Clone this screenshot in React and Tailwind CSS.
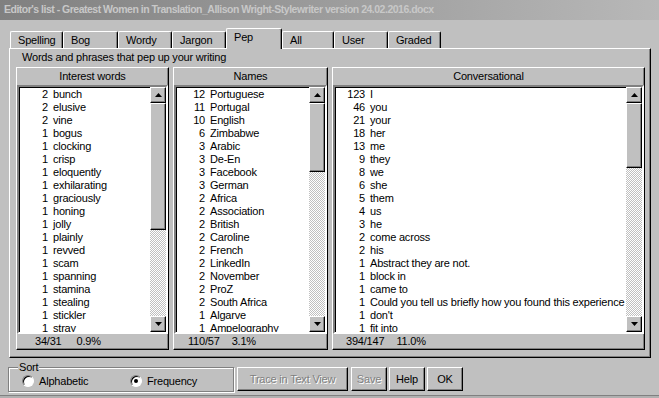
import React from "react";

const raised =
  "border border-t-white border-l-white border-r-black border-b-black shadow-[inset_-1px_-1px_#808080]";

const interest = [
  [2, "bunch"], [2, "elusive"], [2, "vine"], [1, "bogus"], [1, "clocking"],
  [1, "crisp"], [1, "eloquently"], [1, "exhilarating"], [1, "graciously"],
  [1, "honing"], [1, "jolly"], [1, "plainly"], [1, "revved"], [1, "scam"],
  [1, "spanning"], [1, "stamina"], [1, "stealing"], [1, "stickler"], [1, "stray"],
];

const names = [
  [12, "Portuguese"], [11, "Portugal"], [10, "English"], [6, "Zimbabwe"],
  [3, "Arabic"], [3, "De-En"], [3, "Facebook"], [3, "German"], [2, "Africa"],
  [2, "Association"], [2, "British"], [2, "Caroline"], [2, "French"],
  [2, "LinkedIn"], [2, "November"], [2, "ProZ"], [2, "South Africa"],
  [1, "Algarve"], [1, "Ampelography"],
];

const conversational = [
  [123, "I"], [46, "you"], [21, "your"], [18, "her"], [13, "me"], [9, "they"],
  [8, "we"], [6, "she"], [5, "them"], [4, "us"], [3, "he"], [2, "come across"],
  [2, "his"], [1, "Abstract they are not."], [1, "block in"], [1, "came to"],
  [1, "Could you tell us briefly how you found this experience"], [1, "don't"],
  [1, "fit into"],
];

const tabs = [
  ["Spelling", "w-[53px]"],
  ["Bog", "w-[55px]"],
  ["Wordy", "w-[54px]"],
  ["Jargon", "w-[54px]"],
  ["Pep", "w-[56px]"],
  ["All", "w-[52px]"],
  ["User", "w-[54px]"],
  ["Graded", "w-[53px]"],
];

function Arrow({ up }) {
  return (
    <div className={`flex h-[16px] w-[16px] items-center justify-center bg-[#c0c0c0] ${raised}`}>
      <svg width="7" height="4" viewBox="0 0 7 4">
        {up ? <polygon points="3.5,0 7,4 0,4" fill="#000" /> : <polygon points="0,0 7,0 3.5,4" fill="#000" />}
      </svg>
    </div>
  );
}

function ScrollBar({ thumb }) {
  return (
    <div className="flex w-[16px] shrink-0 flex-col">
      <Arrow up />
      <div className={`${thumb} bg-[#c0c0c0] ${raised}`} />
      <div className="flex-1 bg-[repeating-conic-gradient(#c0c0c0_0_25%,#ffffff_0_50%)] bg-size-[2px_2px]" />
      <Arrow />
    </div>
  );
}

function ListFrame({ title, rows, width, numCol, thumb, footer, footerPad, footerGap }) {
  return (
    <div className={`flex h-[283px] shrink-0 flex-col bg-[#c0c0c0] ${width} ${raised}`}>
      <div className="h-[17px] text-center leading-[17px]">{title}</div>
      <div className="flex h-[249px] border-2 border-t-[#808080] border-l-[#808080] border-r-white border-b-white bg-white shadow-[inset_1px_1px_#000]">
        <div className="min-w-0 flex-1 overflow-hidden pt-[1px]">
          {rows.map(([n, w], i) => (
            <div key={i} className="flex h-[13px] leading-[13px] whitespace-nowrap">
              <span className={`shrink-0 text-right ${numCol}`}>{n}</span>
              <span className="ml-[5px]">{w}</span>
            </div>
          ))}
        </div>
        <ScrollBar thumb={thumb} />
      </div>
      <div className={`flex flex-1 leading-[14px] ${footerPad} ${footerGap}`}>
        <span>{footer[0]}</span>
        <span>{footer[1]}</span>
      </div>
    </div>
  );
}

function Radio({ checked, label, className }) {
  return (
    <div className={`flex items-center ${className}`}>
      <div className="flex h-[12px] w-[12px] items-center justify-center rounded-full border border-t-[#808080] border-l-[#808080] border-r-white border-b-white bg-white shadow-[inset_1px_1px_#000]">
        {checked && <div className="h-[4px] w-[4px] rounded-full bg-black" />}
      </div>
      <span className="ml-[5px]">{label}</span>
    </div>
  );
}

export default function App() {
  return (
    <div className="h-[398px] w-[659px] overflow-hidden bg-[#c0c0c0] font-['Liberation_Sans',Arial,sans-serif] text-[11px] tracking-[-0.2px] text-black">
      {/* title bar (inactive) */}
      <div className="flex h-[20px] items-center bg-[linear-gradient(90deg,#808080,#b8b8b8)] pl-[4px] text-[10.5px] font-bold tracking-[-0.5px] text-[#c8c8c8] whitespace-nowrap">
        Editor's list - Greatest Women in Translation_Allison Wright-Stylewriter version 24.02.2016.docx
      </div>

      {/* tabs */}
      <div className="ml-[10px] mt-[8px] flex h-[20px] items-end">
        {tabs.map(([label, w]) =>
          label === "Pep" ? (
            <div
              key={label}
              className={`relative z-10 -mb-[1px] h-[21px] ${w} rounded-t-[2px] border-t border-l border-r border-t-white border-l-white border-r-black bg-[#c0c0c0] pl-[7px] pt-[2px] leading-[13px] shadow-[inset_-1px_0_#808080]`}
            >
              {label}
            </div>
          ) : (
            <div
              key={label}
              className={`h-[17px] ${w} rounded-t-[2px] border-t border-l border-r border-t-white border-l-white border-r-black pl-[7px] pt-[2px] leading-[13px] shadow-[inset_-1px_0_#808080]`}
            >
              {label}
            </div>
          )
        )}
      </div>

      {/* tab page */}
      <div className={`ml-[9px] h-[310px] w-[642px] ${raised}`}>
        <div className="pl-[12px] pt-[2px] leading-[13px]">Words and phrases that pep up your writing</div>
        <div className="mt-[3px] flex gap-[4px] pl-[6px]">
          <ListFrame
            title="Interest words"
            rows={interest}
            width="w-[153px]"
            numCol="w-[29px]"
            thumb="h-[127px]"
            footer={["34/31", "0.9%"]}
            footerPad="pl-[18px]"
            footerGap="gap-[15px]"
          />
          <ListFrame
            title="Names"
            rows={names}
            width="w-[155px]"
            numCol="w-[29px]"
            thumb="h-[69px]"
            footer={["110/57", "3.1%"]}
            footerPad="pl-[14px]"
            footerGap="gap-[12px]"
          />
          <ListFrame
            title="Conversational"
            rows={conversational}
            width="w-[313px]"
            numCol="w-[30px]"
            thumb="h-[65px]"
            footer={["394/147", "11.0%"]}
            footerPad="pl-[13px]"
            footerGap="gap-[12px]"
          />
        </div>
      </div>

      {/* bottom controls */}
      <div className="ml-[8px] mt-[9px] flex">
        <div className="relative h-[25px] w-[226px] border border-[#808080] shadow-[1px_1px_#fff,inset_1px_1px_#fff]">
          <span className="absolute -top-[7px] left-[9px] bg-[#c0c0c0] px-[1px] leading-[13px]">Sort</span>
          <div className="flex h-full items-center pl-[13px] pt-[3px]">
            <Radio label="Alphabetic" className="w-[108px]" />
            <Radio label="Frequency" checked />
          </div>
        </div>
        <div className={`ml-[3px] flex h-[24px] w-[111px] items-center justify-center text-[#808080] [text-shadow:1px_1px_#fff] ${raised}`}>
          Trace in Text View
        </div>
        <div className={`ml-[3px] flex h-[24px] w-[36px] items-center justify-center text-[#808080] [text-shadow:1px_1px_#fff] ${raised}`}>
          Save
        </div>
        <div className={`ml-[2px] flex h-[24px] w-[36px] items-center justify-center ${raised}`}>Help</div>
        <div className={`ml-[2px] flex h-[24px] w-[36px] items-center justify-center ${raised}`}>OK</div>
      </div>
      <div className="mt-[3px] h-[4px] border-t border-[#808080] bg-[#b0b0b0]" />
    </div>
  );
}
